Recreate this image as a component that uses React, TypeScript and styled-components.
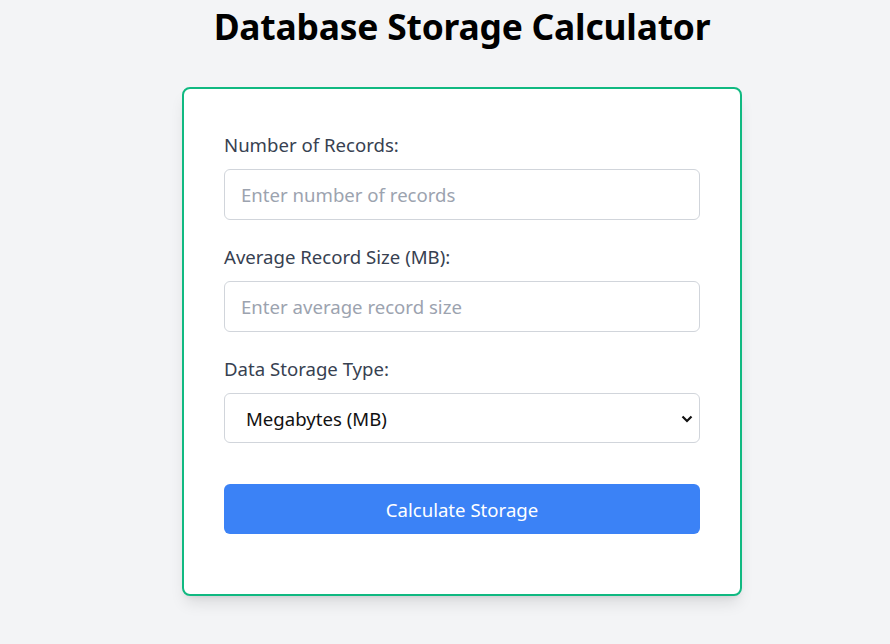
import React, { useState } from 'react';
import styled, { createGlobalStyle } from 'styled-components';

const GlobalStyle = createGlobalStyle`
    html, body {
        margin: 0;
        padding: 0;
        background: #f3f4f6;
        font-family: "Noto Sans", "Open Sans", sans-serif;
    }
`;

// the content sits a little right of centre in the screenshot
const Page = styled.div`
    display: flex;
    flex-direction: column;
    align-items: center;
    min-height: 644px;
    padding-left: 34px;
`;

const Title = styled.h1`
    margin: 5px 0 40px;
    font-size: 35.4px;
    line-height: 42px;
    font-weight: 700;
    color: #000;
    letter-spacing: -0.2px;
`;

const Card = styled.form`
    width: 476px;
    padding: 40px 40px 60px;
    background: #fff;
    border: 2px solid #10b981;
    border-radius: 8px;
    box-shadow: 0 10px 15px -3px rgba(0, 0, 0, 0.1), 0 4px 6px -4px rgba(0, 0, 0, 0.1);
    display: flex;
    flex-direction: column;
`;

const Field = styled.div`
    display: flex;
    flex-direction: column;
    margin-bottom: 21px;
`;

const Label = styled.label`
    font-size: 18.6px;
    line-height: 29px;
    padding-top: 1px;
    color: #374151;
    margin-bottom: 10px;
`;

const Input = styled.input`
    box-sizing: border-box;
    height: 51px;
    width: 100%;
    padding: 0 16px;
    border: 1px solid #d1d5db;
    border-radius: 6px;
    font-family: inherit;
    font-size: 18.6px;
    color: #111827;
    outline: none;
    &::placeholder {
        color: #9ca3af;
    }
`;

const SelectWrap = styled.div`
    position: relative;
`;

const Select = styled.select`
    box-sizing: border-box;
    height: 50px;
    width: 100%;
    padding: 0 15px 0 21px;
    border: 1px solid #d1d5db;
    border-radius: 6px;
    background: #fff;
    font-family: inherit;
    font-size: 18.6px;
    color: #111;
    appearance: none;
    outline: none;
`;

const Chevron = styled.svg`
    position: absolute;
    right: 7px;
    top: 22px;
    pointer-events: none;
`;

const Button = styled.button`
    margin-top: 20px;
    height: 50px;
    border: none;
    border-radius: 6px;
    background: #3b82f6;
    color: #fff;
    font-family: inherit;
    font-size: 18.6px;
    cursor: pointer;
`;

function App() {
    const [records, setRecords] = useState('');
    const [size, setSize] = useState('');
    const [unit, setUnit] = useState('MB');

    return (
        <Page>
            <GlobalStyle/>
            <Title>Database Storage Calculator</Title>
            <Card onSubmit={e => e.preventDefault()}>
                <Field>
                    <Label>Number of Records:</Label>
                    <Input type="number" placeholder="Enter number of records" value={records}
                           onChange={e => setRecords(e.target.value)}/>
                </Field>
                <Field>
                    <Label>Average Record Size (MB):</Label>
                    <Input type="number" placeholder="Enter average record size" value={size}
                           onChange={e => setSize(e.target.value)}/>
                </Field>
                <Field>
                    <Label>Data Storage Type:</Label>
                    <SelectWrap>
                        <Select value={unit} onChange={e => setUnit(e.target.value)}>
                            <option value="MB">Megabytes (MB)</option>
                            <option value="GB">Gigabytes (GB)</option>
                            <option value="TB">Terabytes (TB)</option>
                        </Select>
                        <Chevron width="12" height="8" viewBox="0 0 12 8">
                            <path d="M1.5 1.5 L6 6 L10.5 1.5" fill="none" stroke="#111" strokeWidth="2.2"/>
                        </Chevron>
                    </SelectWrap>
                </Field>
                <Button type="submit">Calculate Storage</Button>
            </Card>
        </Page>
    );
}

export default App;
